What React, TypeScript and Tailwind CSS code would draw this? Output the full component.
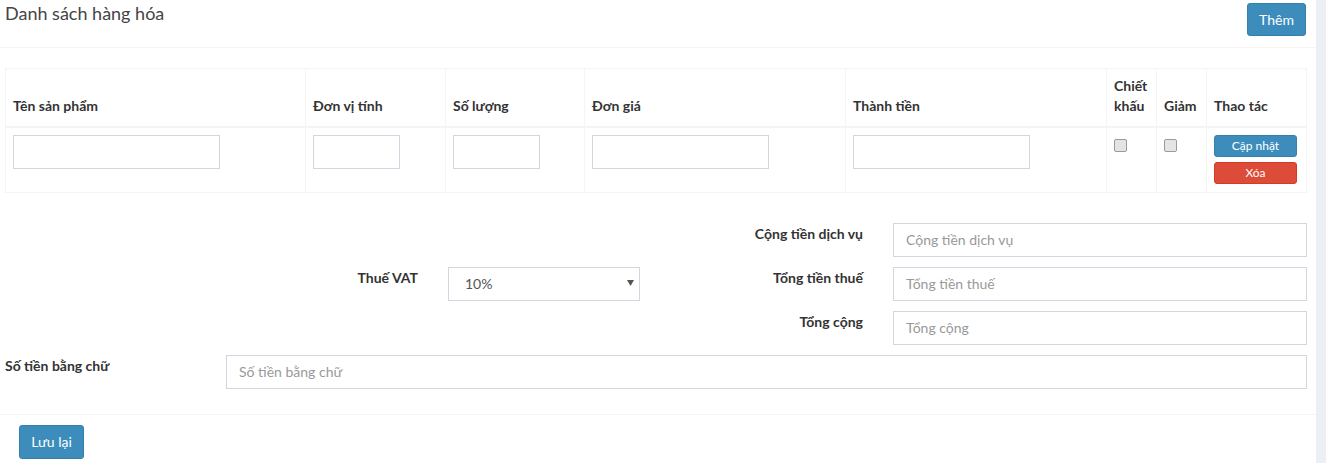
import React from "react";

const font = { fontFamily: '"Source Sans Pro", Lato, "Noto Sans", sans-serif' };

function Cb() {
  return <span className="mt-[4px] inline-block h-[13px] w-[13px] rounded-[2px] border border-[#9a9a9a] bg-[#e4e4e4]" />;
}

function Input({ w, ph }: { w: string; ph?: string }) {
  return (
    <input
      placeholder={ph}
      className={`${w} h-[34px] border border-[#d2d6de] bg-white px-[12px] text-[14px] text-[#555] outline-none placeholder:text-[#999]`}
    />
  );
}

export default function App() {
  const th = "border border-[#f4f4f4] pl-[7px] pr-[8px] pb-[10px] pt-[7px] text-left align-bottom text-[14px] font-bold leading-[20px] text-[#333]";
  const td = "border border-[#f4f4f4] pl-[7px] pr-[8px] py-[7px] align-top";
  return (
    <div className="flex h-[463px] w-full bg-[#ecf0f5] text-[14px] text-[#333]" style={font}>
      <div className="w-[1316px] bg-white">
        <div className="flex h-[48px] items-start justify-between border-b border-[#f4f4f4] pl-[5px] pr-[10px]">
          <div className="pt-[1px] text-[18px] leading-[24px] text-[#444]">Danh sách hàng hóa</div>
          <button className="mt-[3px] h-[33px] w-[59px] rounded-[3px] border border-[#367fa9] bg-[#3c8dbc] text-[14px] text-white">Thêm</button>
        </div>

        <div className="px-[5px] pt-[20px]">
          <table className="w-[1301px] table-fixed border-collapse">
            <colgroup>
              <col className="w-[300px]" />
              <col className="w-[140px]" />
              <col className="w-[139px]" />
              <col className="w-[261px]" />
              <col className="w-[261px]" />
              <col className="w-[50px]" />
              <col className="w-[50px]" />
              <col className="w-[100px]" />
            </colgroup>
            <thead>
              <tr className="border-b-2 border-[#f4f4f4]">
                <th className={th}>Tên sản phẩm</th>
                <th className={th}>Đơn vị tính</th>
                <th className={th}>Số lượng</th>
                <th className={th}>Đơn giá</th>
                <th className={th}>Thành tiền</th>
                <th className={th}>Chiết khấu</th>
                <th className={th}>Giảm</th>
                <th className={th}>Thao tác</th>
              </tr>
            </thead>
            <tbody>
              <tr className="h-[65px]">
                <td className={td}><Input w="w-[207px] block" /></td>
                <td className={td}><Input w="w-[87px] block" /></td>
                <td className={td}><Input w="w-[87px] block" /></td>
                <td className={td}><Input w="w-[177px] block" /></td>
                <td className={td}><Input w="w-[177px] block" /></td>
                <td className={td}><Cb /></td>
                <td className={td}><Cb /></td>
                <td className={td}>
                  <div className="flex flex-col gap-[5px]">
                    <button className="h-[22px] w-[83px] rounded-[3px] border border-[#367fa9] bg-[#3c8dbc] text-[12px] text-white">Cập nhật</button>
                    <button className="h-[22px] w-[83px] rounded-[3px] border border-[#d73925] bg-[#dd4b39] text-[12px] text-white">Xóa</button>
                  </div>
                </td>
              </tr>
            </tbody>
          </table>
        </div>

        <div className="flex flex-col gap-[10px] pt-[30px]">
          <div className="flex">
            <div className="w-[640px]" />
            <div className="w-[223px] text-right font-bold">Cộng tiền dịch vụ</div>
            <div className="ml-[30px]"><Input w="w-[414px]" ph="Cộng tiền dịch vụ" /></div>
          </div>
          <div className="flex">
            <div className="w-[418px] text-right font-bold">Thuế VAT</div>
            <div className="relative ml-[30px] w-[192px]">
              <select className="h-[34px] w-[192px] appearance-none border border-[#d2d6de] bg-white pl-[16px] text-[14px] text-[#555] outline-none">
                <option>10%</option>
              </select>
              <svg className="pointer-events-none absolute right-[6px] top-[13px]" width="7" height="6" viewBox="0 0 7 6">
                <path d="M0 0H7L3.5 6Z" fill="#555" />
              </svg>
            </div>
            <div className="w-[223px] text-right font-bold">Tổng tiền thuế</div>
            <div className="ml-[30px]"><Input w="w-[414px]" ph="Tổng tiền thuế" /></div>
          </div>
          <div className="flex">
            <div className="w-[640px]" />
            <div className="w-[223px] text-right font-bold">Tổng cộng</div>
            <div className="ml-[30px]"><Input w="w-[414px]" ph="Tổng cộng" /></div>
          </div>
          <div className="flex pl-[5px]">
            <div className="w-[221px] font-bold">Số tiền bằng chữ</div>
            <Input w="w-[1081px]" ph="Số tiền bằng chữ" />
          </div>
        </div>

        <div className="mt-[25px] border-t border-[#f4f4f4] pl-[19px] pt-[10px]">
          <button className="h-[34px] w-[65px] rounded-[3px] border border-[#367fa9] bg-[#3c8dbc] text-[14px] text-white">Lưu lại</button>
        </div>
      </div>
    </div>
  );
}
